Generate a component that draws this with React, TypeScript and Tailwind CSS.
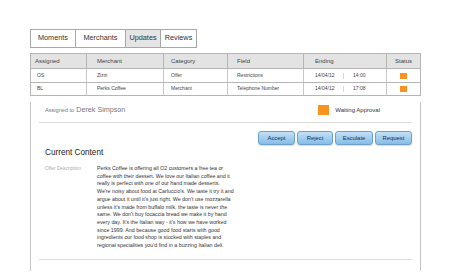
const tabs = [
  { label: "Moments", w: "w-[44px]", active: false },
  { label: "Merchants", w: "w-[50px]", active: false },
  { label: "Updates", w: "w-[35px]", active: true },
  { label: "Reviews", w: "flex-1", active: false },
];

const rows = [
  { who: "OS", merchant: "Zizzi", category: "Offer", field: "Restrictions", date: "14/04/12", time: "14:00", h: "h-[14px] border-b border-[#b5b5b5]" },
  { who: "BL", merchant: "Perks Coffee", category: "Merchant", field: "Telephone Number", date: "14/04/12", time: "17:08", h: "h-[13px] border-b border-[#b5b5b5]" },
];

const copy = [
  "Perks Coffee is offering all O2 customers a free tea or",
  "coffee with their dessert. We love our Italian coffee and it",
  "really is perfect with one of our hand made desserts.",
  "We're noisy about food at Carluccio's. We taste it try it and",
  "argue about it until it's just right. We don't use mozzarella",
  "unless it's made from buffalo milk, the taste is never the",
  "same. We don't buy focaccia bread we make it by hand",
  "every day. It's the Italian way - it's how we have worked",
  "since 1999. And because good food starts with good",
  "ingredients our food shop is stocked with staples and",
  "regional specialities you'd find in a buzzing Italian deli.",
];

const buttons = [
  { label: "Accept", w: "w-[37px]" },
  { label: "Reject", w: "w-[36px]" },
  { label: "Esculate", w: "w-[38px]" },
  { label: "Request", w: "w-[37px]" },
];

export default function App() {
  return (
    <div className="w-[454px] h-[274px] bg-white pt-[29px] pl-[30px] text-[#333] font-['Liberation_Sans',Arial,sans-serif]">
      {/* tabs */}
      <div className="flex h-[19px] w-[167px] border border-[#a8a8a8]">
        {tabs.map((t, i) => (
          <div
            key={t.label}
            className={`${t.w} flex items-center justify-center text-[7.3px] text-[#333] ${i > 0 ? "border-l border-[#a8a8a8]" : ""} ${t.active ? "bg-[#e4e4e4]" : ""}`}
          >
            {t.label}
          </div>
        ))}
      </div>

      {/* table */}
      <div className="mt-[5px] w-[391px] border-x border-t border-[#b5b5b5]">
        <div className="flex h-[15px] bg-[#e3e3e3] border-b border-[#b5b5b5] text-[6px] text-[#444]">
          <div className="w-[55px] flex items-center pl-[4px]">Assigned</div>
          <div className="w-[77px] flex items-center pl-[10px] border-l border-[#b5b5b5]">Merchant</div>
          <div className="w-[64px] flex items-center pl-[7px] border-l border-[#b5b5b5]">Category</div>
          <div className="w-[76px] flex items-center pl-[9px] border-l border-[#b5b5b5]">Field</div>
          <div className="w-[83px] flex items-center pl-[11px] border-l border-[#b5b5b5]">Ending</div>
          <div className="flex-1 flex items-center justify-center border-l border-[#b5b5b5]">Status</div>
        </div>
        {rows.map((r) => (
          <div key={r.who} className={`flex ${r.h} text-[5px] text-[#444]`}>
            <div className="w-[55px] flex items-center pl-[6px]">{r.who}</div>
            <div className="w-[77px] flex items-center pl-[10px] border-l border-[#c8c8c8]">{r.merchant}</div>
            <div className="w-[64px] flex items-center pl-[7px] border-l border-[#c8c8c8]">{r.category}</div>
            <div className="w-[76px] flex items-center pl-[9px] border-l border-[#c8c8c8]">{r.field}</div>
            <div className="w-[83px] flex items-center pl-[11px] border-l border-[#c8c8c8]">
              <span className="w-[28px]">{r.date}</span>
              <span className="h-[6px] border-l border-[#d8d8d8]" />
              <span className="ml-[9px]">{r.time}</span>
            </div>
            <div className="flex-1 flex items-center justify-center border-l border-[#c8c8c8]">
              <span className="w-[7px] h-[6px] bg-[#f7931e]" />
            </div>
          </div>
        ))}
      </div>

      {/* detail panel */}
      <div className="w-[391px] h-[169px] border-x border-[#c4c4c4] px-[8px]">
        <div className="mt-[6px] h-[16px] flex items-center justify-between pl-[6px]">
          <div className="flex items-baseline gap-[2px] text-[#777]">
            <span className="text-[5.6px]">Assigned to</span>
            <span className="text-[7.2px]">Derek Simpson</span>
          </div>
          <div className="flex items-center gap-[6px] mr-[32px]">
            <span className="w-[11px] h-[10px] bg-[#f7931e]" />
            <span className="text-[6px] text-[#333]">Waiting Approval</span>
          </div>
        </div>
        <div className="mt-[4px] border-t border-[#dcdcdc]" />

        <div className="mt-[8px] flex justify-end gap-[2px]">
          {buttons.map((b) => (
            <button
              key={b.label}
              className={`${b.w} h-[14px] rounded-[3px] border border-[#6f9fcb] bg-gradient-to-b from-[#c3e1f7] to-[#84bde9] text-[5.9px] text-[#1d2d55] shadow-[0_1px_1px_rgba(0,0,0,0.15)] flex items-center justify-center`}
            >
              {b.label}
            </button>
          ))}
        </div>

        <div className="mt-[2px] pl-[6px] text-[8.2px] leading-[12px] text-[#222]">Current Content</div>

        <div className="mt-[6px] flex pl-[6px]">
          <div className="w-[52px] text-[4.8px] leading-[7.7px] text-[#aaa]">Offer Description</div>
          <div className="text-[5.3px] leading-[7.7px] text-[#333]">
            {copy.map((line) => (
              <div key={line} className="whitespace-nowrap">{line}</div>
            ))}
          </div>
        </div>
        <div className="mt-[9px] border-t border-[#dcdcdc]" />
      </div>
    </div>
  );
}
